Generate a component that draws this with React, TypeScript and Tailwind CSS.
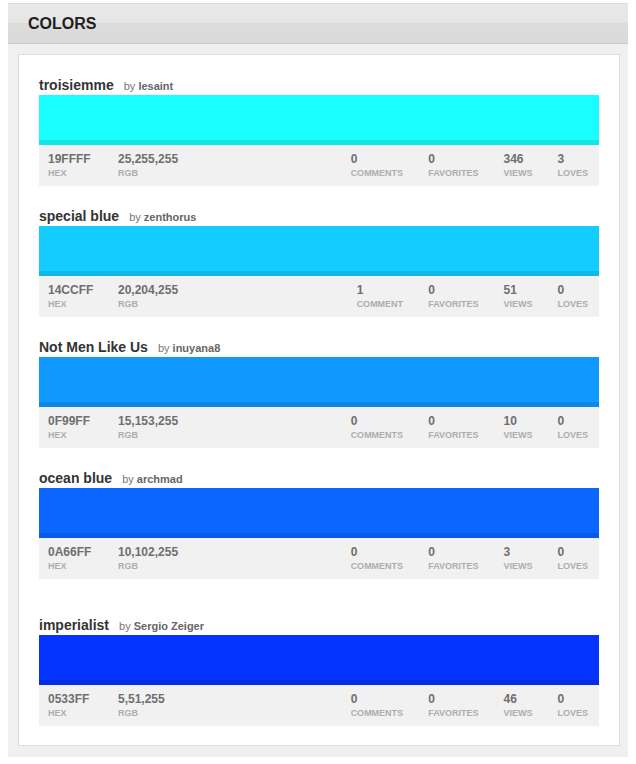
import React from "react";

type Item = {
  title: string;
  by: string;
  hex: string;
  rgb: string;
  comments: string;
  commentLabel: string;
  favorites: string;
  views: string;
  loves: string;
  extraTop?: boolean;
};

const items: Item[] = [
  { title: "troisiemme", by: "lesaint", hex: "19FFFF", rgb: "25,255,255", comments: "0", commentLabel: "COMMENTS", favorites: "0", views: "346", loves: "3" },
  { title: "special blue", by: "zenthorus", hex: "14CCFF", rgb: "20,204,255", comments: "1", commentLabel: "COMMENT", favorites: "0", views: "51", loves: "0" },
  { title: "Not Men Like Us", by: "inuyana8", hex: "0F99FF", rgb: "15,153,255", comments: "0", commentLabel: "COMMENTS", favorites: "0", views: "10", loves: "0" },
  { title: "ocean blue", by: "archmad", hex: "0A66FF", rgb: "10,102,255", comments: "0", commentLabel: "COMMENTS", favorites: "0", views: "3", loves: "0" },
  { title: "imperialist", by: "Sergio Zeiger", hex: "0533FF", rgb: "5,51,255", comments: "0", commentLabel: "COMMENTS", favorites: "0", views: "46", loves: "0", extraTop: true },
];

function Stat({ value, label, className = "" }: { value: string; label: string; className?: string }) {
  return (
    <div className={"flex flex-col " + className}>
      <div className="text-[12px] leading-[14px] font-bold text-[#6f6f6f]">{value}</div>
      <div className="mt-[1px] text-[9px] leading-[12px] font-bold text-[#adadad]">{label}</div>
    </div>
  );
}

function ColorItem({ item, first }: { item: Item; first: boolean }) {
  const mt = first ? "" : item.extraTop ? "mt-[38px]" : "mt-[22px]";
  return (
    <div className={mt}>
      <div className="flex items-baseline h-[17px] mb-[1px]">
        <span className="text-[14px] leading-[17px] font-bold text-[#333333]">{item.title}</span>
        <span className="ml-[10px] text-[11px] leading-[17px] text-[#777777]">
          by <span className="font-bold text-[#666666]">{item.by}</span>
        </span>
      </div>
      <div className="flex flex-col h-[50px]" style={{ backgroundColor: "#" + item.hex }}>
        <div className="h-[45px]" />
        <div className="h-[5px] bg-black/10" />
      </div>
      <div className="flex bg-[#f1f1f1] pt-[7px] pb-[7px] pl-[9px] pr-[11px]">
        <Stat value={item.hex} label="HEX" className="w-[70px]" />
        <Stat value={item.rgb} label="RGB" />
        <div className="ml-auto flex gap-[25px]">
          <Stat value={item.comments} label={item.commentLabel} />
          <Stat value={item.favorites} label="FAVORITES" />
          <Stat value={item.views} label="VIEWS" />
          <Stat value={item.loves} label="LOVES" />
        </div>
      </div>
    </div>
  );
}

export default function App() {
  return (
    <div
      className="w-[636px] h-[764px] bg-white pt-[3px] pl-[8px]"
      style={{ fontFamily: '"Liberation Sans", Arial, Helvetica, sans-serif' }}
    >
      <div className="w-[620px] bg-[#f0f0f0]">
        <div className="h-[41px] border-t border-[#dadada] border-b border-b-[#c8c8c8] bg-[linear-gradient(#e9e9e9_0%,#e5e5e5_50%,#dcdcdc_50%,#dadada_100%)] flex items-center pl-[20px]">
          <span className="text-[16px] font-bold text-[#1e1e1e] leading-none mt-[1px]">COLORS</span>
        </div>
        <div className="pt-[10px] pl-[10px] pr-[8px] pb-[11px]">
          <div className="bg-white border border-[#dedede] pt-[22px] pb-[19px] px-[20px]">
            {items.map((it, i) => (
              <ColorItem key={it.hex} item={it} first={i === 0} />
            ))}
          </div>
        </div>
      </div>
    </div>
  );
}
